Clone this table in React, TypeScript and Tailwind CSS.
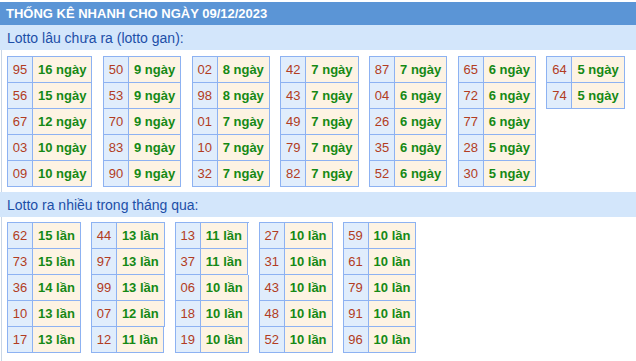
import React from "react";

type Row = [string, string];

const gan: Row[][] = [
  [["95", "16"], ["56", "15"], ["67", "12"], ["03", "10"], ["09", "10"]],
  [["50", "9"], ["53", "9"], ["70", "9"], ["83", "9"], ["90", "9"]],
  [["02", "8"], ["98", "8"], ["01", "7"], ["10", "7"], ["32", "7"]],
  [["42", "7"], ["43", "7"], ["49", "7"], ["79", "7"], ["82", "7"]],
  [["87", "7"], ["04", "6"], ["26", "6"], ["35", "6"], ["52", "6"]],
  [["65", "6"], ["72", "6"], ["77", "6"], ["28", "5"], ["30", "5"]],
  [["64", "5"], ["74", "5"]],
];

const nhieu: Row[][] = [
  [["62", "15"], ["73", "15"], ["36", "14"], ["10", "13"], ["17", "13"]],
  [["44", "13"], ["97", "13"], ["99", "13"], ["07", "12"], ["12", "11"]],
  [["13", "11"], ["37", "11"], ["06", "10"], ["18", "10"], ["19", "10"]],
  [["27", "10"], ["31", "10"], ["43", "10"], ["48", "10"], ["52", "10"]],
  [["59", "10"], ["61", "10"], ["79", "10"], ["91", "10"], ["96", "10"]],
];

function Table({ rows, unit }: { rows: Row[]; unit: string }) {
  return (
    <div className="flex flex-col border-l border-t border-[#8db2f2]">
      {rows.map(([n, v], i) => (
        <div key={i} className="flex h-[26px]">
          <div className="w-[25px] box-border flex items-center justify-center border-r border-b border-[#8db2f2] bg-[#e0edfc] text-[#b23c22] text-[13px]">
            {n}
          </div>
          <div className="box-border flex items-center justify-center px-[5px] border-r border-b border-[#8db2f2] bg-[#fdf3e3] text-[#158915] font-bold text-[13px] whitespace-nowrap">
            {v} {unit}
          </div>
        </div>
      ))}
    </div>
  );
}

export default function App() {
  return (
    <div
      className="w-[636px] h-[361px] bg-white overflow-hidden pt-[2px]"
      style={{ fontFamily: '"Liberation Sans", Arial, sans-serif' }}
    >
      <div className="h-[23px] bg-[#5b95d6] flex items-center pl-[6px] text-white font-bold text-[13px] leading-none">
        THỐNG KÊ NHANH CHO NGÀY 09/12/2023
      </div>
      <div className="h-[25px] bg-[#d3e6fb] flex items-center pl-[7px] text-[#1d4fa8] text-[14px] leading-none">
        Lotto lâu chưa ra (lotto gan):
      </div>
      <div className="ml-[1px] border-l border-[#c9d6e6] pl-[5px] pt-[6px] pb-[5px] flex items-start gap-[10.5px]">
        {gan.map((t, i) => (
          <Table key={i} rows={t} unit="ngày" />
        ))}
      </div>
      <div className="h-[25px] bg-[#d3e6fb] flex items-center pl-[7px] text-[#1d4fa8] text-[14px] leading-none">
        Lotto ra nhiều trong tháng qua:
      </div>
      <div className="ml-[1px] border-l border-[#c9d6e6] pl-[5px] pt-[5px] pb-[20px] flex items-start gap-[10px]">
        {nhieu.map((t, i) => (
          <Table key={i} rows={t} unit="lần" />
        ))}
      </div>
    </div>
  );
}
